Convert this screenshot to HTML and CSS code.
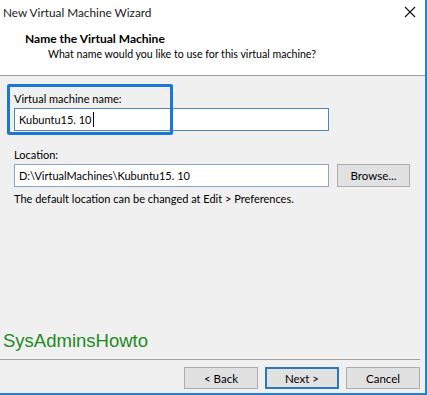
FILE: index.html
```html
<!DOCTYPE html>
<html lang="en">
<head>
    <meta charset="UTF-8">
    <title>New Virtual Machine Wizard</title>
    <link rel="stylesheet" href="styles.css">
</head>
<body>
    <div class="window">
        <div class="header">
            <div class="titlebar">
                <span class="title">New Virtual Machine Wizard</span>
                <svg class="close" width="12" height="12" viewBox="0 0 12 12">
                    <path d="M1 1 L11 11 M11 1 L1 11" stroke="#111" stroke-width="1.1" fill="none"/>
                </svg>
            </div>
            <div class="heading">Name the Virtual Machine</div>
            <div class="subheading">What name would you like to use for this virtual machine?</div>
        </div>

        <div class="content">
            <div class="field field--name">
                <label class="label">Virtual machine name:</label>
                <div class="input input--focus">Kubuntu15. 10<span class="caret"></span></div>
                <!-- marco azul de resaltado -->
                <div class="highlight"></div>
            </div>

            <div class="field field--location">
                <label class="label">Location:</label>
                <div class="row">
                    <div class="input">D:\VirtualMachines\Kubuntu15. 10</div>
                    <button class="btn btn--browse">Browse...</button>
                </div>
                <div class="hint">The default location can be changed at Edit &gt; Preferences.</div>
            </div>

            <div class="brand">SysAdminsHowto</div>
        </div>

        <div class="footer">
            <button class="btn">&lt; Back</button>
            <button class="btn btn--default">Next &gt;</button>
            <button class="btn">Cancel</button>
        </div>
    </div>
</body>
</html>
```

FILE: styles.css
```css
html, body {
    margin: 0;
    padding: 0;
}
body {
    font-family: Lato, 'Noto Sans', Arial, sans-serif;
    font-size: 11px;
    color: #000;
    background: #f0f0f0;
}
.window {
    width: 427px;
    height: 395px;
    box-sizing: border-box;
    border-right: 2px solid #2a7fc9;
    border-bottom: 2px solid #2a7fc9;
    display: flex;
    flex-direction: column;
    background: #f0f0f0;
}
.header {
    background: #fff;
    height: 76px;
    box-sizing: border-box;
    border-bottom: 1px solid #a0a0a0;
}
.titlebar {
    height: 24px;
    display: flex;
    align-items: center;
    justify-content: space-between;
    padding: 0 9px 0 3px;
}
.title {
    font-size: 11.8px;
    color: #1a1a1a;
}
.heading {
    margin: 7px 0 0 25px;
    font-size: 12px;
    font-weight: bold;
    line-height: 15px;
}
.subheading {
    margin: 1px 0 0 48px;
    font-size: 10.6px;
    line-height: 15px;
}
.content {
    flex: 1;
    padding: 0 0 0 14px;
    display: flex;
    flex-direction: column;
}
.field {
    position: relative;
}
.field--name {
    margin-top: 15px;
}
.label {
    display: block;
    line-height: 15px;
    height: 16px;
}
.input {
    width: 315px;
    height: 23px;
    box-sizing: border-box;
    border: 1px solid #8aa6c1;
    background: #fff;
    padding: 0 4px;
    line-height: 21px;
    display: flex;
    align-items: center;
    white-space: nowrap;
}
.input--focus {
    margin-top: 1px;
    border-color: #4f86b8;
}
.caret {
    display: inline-block;
    width: 1px;
    height: 15px;
    background: #000;
    margin-left: 1px;
}
.highlight {
    position: absolute;
    left: -7px;
    top: -7px;
    width: 166px;
    height: 51px;
    border: 3px solid #1a78d2;
    border-radius: 2px;
    box-sizing: border-box;
}
.field--location {
    margin-top: 16px;
}
.field--location .label {
    margin-bottom: 1px;
}
.row {
    display: flex;
    gap: 8px;
}
.hint {
    margin-top: 4px;
    line-height: 15px;
}
.btn {
    font-family: inherit;
    font-size: 11.5px;
    width: 74px;
    height: 22px;
    padding: 0;
    background: #e1e1e1;
    border: 1px solid #adadad;
    color: #000;
}
.btn--browse {
    width: 73px;
    height: 23px;
}
.btn--default {
    border: 2px solid #2b78bd;
}
.brand {
    margin: auto 0 7px -11px;
    font-family: 'Liberation Sans', Arial, sans-serif;
    font-size: 18.5px;
    color: #1e8a1e;
    line-height: 22px;
}
.footer {
    height: 34px;
    border-top: 1px solid #a0a0a0;
    margin-right: 5px;
    display: flex;
    justify-content: flex-end;
    align-items: flex-start;
    padding-top: 7px;
    gap: 7px;
    box-sizing: border-box;
}
```
